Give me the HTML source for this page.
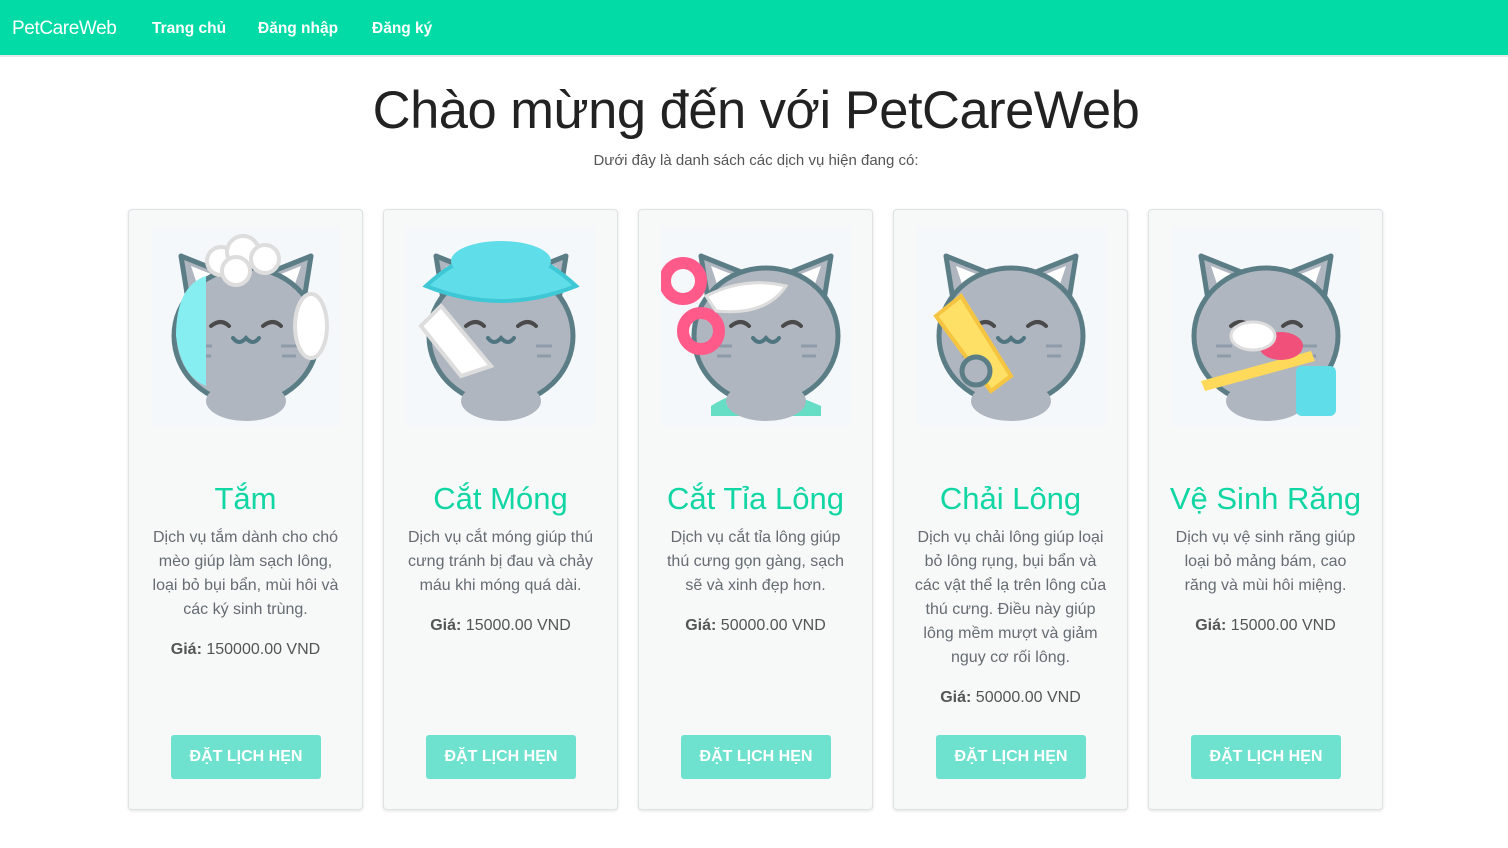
<!DOCTYPE html>
<html><head><meta charset="utf-8">
<style>
*{margin:0;padding:0;box-sizing:border-box}
body{width:1508px;height:848px;background:#fff;font-family:"Liberation Sans",sans-serif;color:#212529;overflow:hidden;position:relative}
.nav{height:57px;background:#02dba6;border-bottom:2px solid #e6eaec;position:relative}
.nav .brand{position:absolute;left:12px;top:18px;font-size:19px;color:#fff;letter-spacing:-0.4px}
.nav a{position:absolute;top:20px;font-size:15.5px;font-weight:bold;color:#fff;text-decoration:none}
h1{position:absolute;left:0;width:1512px;top:80px;text-align:center;font-size:52.5px;font-weight:300;color:#222;letter-spacing:-0.5px}
.sub{position:absolute;left:0;width:1512px;top:152px;text-align:center;font-size:15px;color:#555}
.card{position:absolute;top:209px;width:235px;height:601px;background:#f7f8f8;border:1px solid #dfe3e6;border-radius:4px;box-shadow:0 1px 3px rgba(0,0,0,.12)}
.img{position:absolute;left:22px;top:16px;width:190px;height:200px;background:#f5f8fb}
.card h3{position:absolute;top:271px;left:0;width:100%;text-align:center;font-size:31px;font-weight:normal;color:#10d6a4}
.card p{position:absolute;top:316px;left:20px;right:20px;text-align:center;font-size:16px;line-height:24px;color:#656c72}
.card .price{display:block;margin-top:16px;color:#555}
.btn{position:absolute;left:42px;top:525px;width:150px;height:44px;background:#6ee2ce;border-radius:3px;color:#fff;font-weight:bold;font-size:16px;text-align:center;line-height:44px}
</style></head><body>
<div class="nav"><span class="brand">PetCareWeb</span>
<a style="left:152px">Trang chủ</a><a style="left:258px">Đăng nhập</a><a style="left:372px">Đăng ký</a></div>
<h1>Chào mừng đến với PetCareWeb</h1>
<div class="sub">Dưới đây là danh sách các dịch vụ hiện đang có:</div>

<svg width="0" height="0" style="position:absolute"><defs>
<g id="cat">
<path d="M38 80 L30 30 L80 50 Z" fill="#b0b6c0" stroke="#5b7d86" stroke-width="5" stroke-linejoin="round"/>
<path d="M152 80 L160 30 L110 50 Z" fill="#b0b6c0" stroke="#5b7d86" stroke-width="5" stroke-linejoin="round"/>
<path d="M40 40 L50 70 L70 52 Z" fill="#fff"/>
<path d="M150 40 L140 70 L120 52 Z" fill="#fff"/>
<ellipse cx="95" cy="110" rx="72" ry="68" fill="#b0b6c0" stroke="#5b7d86" stroke-width="5"/>
<ellipse cx="95" cy="175" rx="40" ry="20" fill="#b0b6c0"/>
<path d="M82 112 q6 8 13 0 q7 8 13 0" fill="none" stroke="#4f7680" stroke-width="4" stroke-linecap="round"/>
<path d="M60 100 q10 -8 18 0 M112 100 q10 -8 18 0" fill="none" stroke="#4a4a4a" stroke-width="4" stroke-linecap="round"/>
<path d="M45 120 h16 M46 130 h14 M130 120 h16 M131 130 h14" stroke="#8e9caa" stroke-width="3"/>
</g></defs></svg>

<div class="card" style="left:128px"><div class="img"><svg width="190" height="200"><use href="#cat"/><path d="M25 110 q0 -50 30 -60 l0 110 q-25 -10 -30 -50z" fill="#86eef0"/><g fill="#fff" stroke="#ddd" stroke-width="4"><circle cx="70" cy="35" r="14"/><circle cx="92" cy="26" r="16"/><circle cx="114" cy="33" r="14"/><circle cx="85" cy="45" r="14"/></g><ellipse cx="160" cy="100" rx="16" ry="32" fill="#fff" stroke="#ddd" stroke-width="4"/></svg></div>
<h3>Tắm</h3><p>Dịch vụ tắm dành cho chó mèo giúp làm sạch lông, loại bỏ bụi bẩn, mùi hôi và các ký sinh trùng.<span class="price"><b>Giá:</b> 150000.00 VND</span></p><div class="btn">ĐẶT LỊCH HẸN</div></div>

<div class="card" style="left:383px"><div class="img"><svg width="190" height="200"><use href="#cat"/><path d="M20 60 q75 -70 150 0 q-75 30 -150 0z" fill="#5fdde8" stroke="#3ec8d6" stroke-width="4"/><ellipse cx="95" cy="35" rx="50" ry="20" fill="#5fdde8"/><path d="M15 100 l40 50 l30 -10 l-50 -60z" fill="#fff" stroke="#ddd" stroke-width="4"/></svg></div>
<h3>Cắt Móng</h3><p>Dịch vụ cắt móng giúp thú cưng tránh bị đau và chảy máu khi móng quá dài.<span class="price"><b>Giá:</b> 15000.00 VND</span></p><div class="btn">ĐẶT LỊCH HẸN</div></div>

<div class="card" style="left:638px"><div class="img"><svg width="190" height="200"><path d="M50 180 q45 -30 110 0 v10 h-110z" fill="#66dec5"/><use href="#cat" x="10"/><circle cx="22" cy="55" r="18" fill="none" stroke="#ff5a8a" stroke-width="12"/><circle cx="40" cy="105" r="18" fill="none" stroke="#ff5a8a" stroke-width="12"/><path d="M45 70 q40 -20 80 -10 q-20 30 -70 25z" fill="#fff" stroke="#ddd" stroke-width="3"/></svg></div>
<h3>Cắt Tỉa Lông</h3><p>Dịch vụ cắt tỉa lông giúp thú cưng gọn gàng, sạch sẽ và xinh đẹp hơn.<span class="price"><b>Giá:</b> 50000.00 VND</span></p><div class="btn">ĐẶT LỊCH HẸN</div></div>

<div class="card" style="left:893px"><div class="img"><svg width="190" height="200"><use href="#cat"/><path d="M20 90 l25 -20 l50 80 l-20 15z" fill="#ffe066" stroke="#f5c542" stroke-width="4"/><circle cx="60" cy="145" r="14" fill="#b0b6c0" stroke="#5b7d86" stroke-width="5"/></svg></div>
<h3>Chải Lông</h3><p>Dịch vụ chải lông giúp loại bỏ lông rụng, bụi bẩn và các vật thể lạ trên lông của thú cưng. Điều này giúp lông mềm mượt và giảm nguy cơ rối lông.<span class="price"><b>Giá:</b> 50000.00 VND</span></p><div class="btn">ĐẶT LỊCH HẸN</div></div>

<div class="card" style="left:1148px"><div class="img"><svg width="190" height="200"><use href="#cat"/><rect x="125" y="140" width="40" height="50" rx="6" fill="#5fdde8"/><path d="M30 155 l110 -30 l4 10 l-110 30z" fill="#ffd95a"/><ellipse cx="110" cy="120" rx="22" ry="14" fill="#f0507a"/><ellipse cx="82" cy="110" rx="22" ry="14" fill="#fff" stroke="#ddd" stroke-width="3"/></svg></div>
<h3>Vệ Sinh Răng</h3><p>Dịch vụ vệ sinh răng giúp loại bỏ mảng bám, cao răng và mùi hôi miệng.<span class="price"><b>Giá:</b> 15000.00 VND</span></p><div class="btn">ĐẶT LỊCH HẸN</div></div>
</body></html>
